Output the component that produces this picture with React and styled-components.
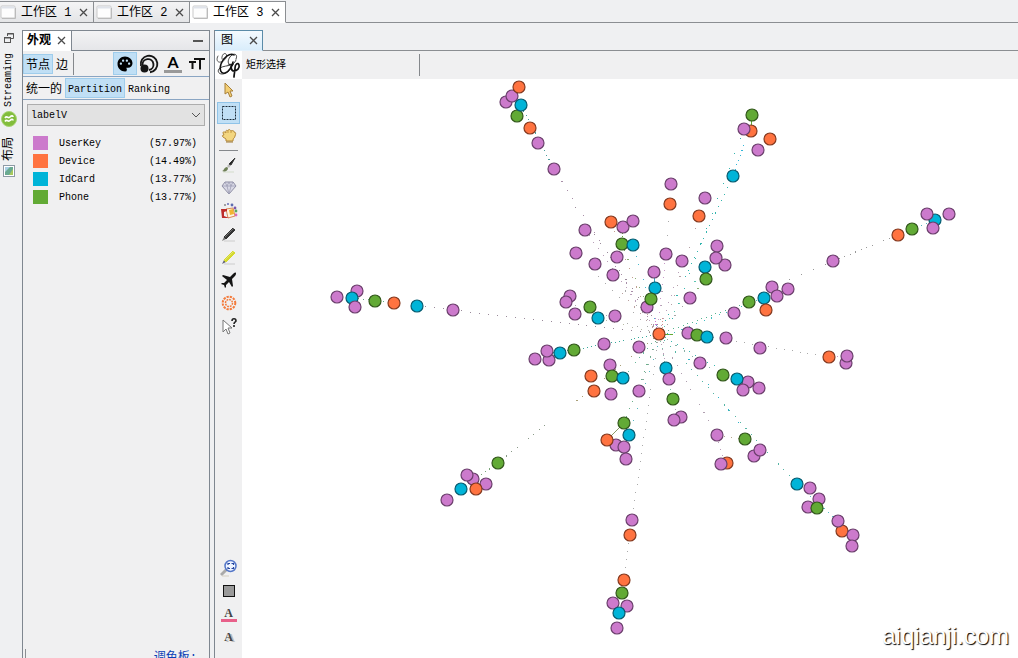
import React, { useState } from 'react'
import styled, { createGlobalStyle } from 'styled-components'
import { MdPalette } from 'react-icons/md'

const colors = {
  P: '#cc7acc',
  O: '#ff7340',
  C: '#00b4d8',
  G: '#62aa35',
}

const strokes = {
  P: '#6b3f6c',
  O: '#84391f',
  C: '#075c70',
  G: '#32571b',
}

const legend = [
  { name: 'UserKey', percent: '(57.97%)', color: colors.P },
  { name: 'Device', percent: '(14.49%)', color: colors.O },
  { name: 'IdCard', percent: '(13.77%)', color: colors.C },
  { name: 'Phone', percent: '(13.77%)', color: colors.G },
]

// kind, x, y - later nodes are drawn over earlier ones
const nodes = [
  ['P', 506, 102], ['P', 512, 96], ['O', 519, 87], ['G', 517, 116], ['C', 521, 105], ['O', 530, 128],
  ['P', 538, 143], ['P', 554, 169], ['P', 337, 297], ['P', 357, 291], ['C', 352, 298], ['P', 355, 307],
  ['G', 375, 301], ['O', 394, 303], ['C', 417, 306], ['P', 453, 310],
  ['G', 752, 115], ['O', 751, 131], ['P', 744, 129], ['O', 770, 139], ['P', 758, 150], ['C', 733, 176],
  ['P', 671, 184], ['O', 670, 204], ['P', 705, 198], ['O', 699, 216],
  ['O', 611, 222], ['P', 623, 227], ['P', 633, 221], ['P', 585, 230], ['G', 622, 244], ['C', 633, 245],
  ['P', 576, 253], ['P', 617, 257], ['P', 595, 264], ['P', 613, 275], ['P', 666, 254], ['P', 682, 261],
  ['P', 654, 272], ['C', 655, 288], ['P', 647, 307], ['G', 651, 299], ['P', 690, 298],
  ['P', 717, 246], ['P', 725, 265], ['P', 716, 258], ['C', 705, 267], ['G', 706, 279],
  ['P', 570, 296], ['P', 566, 302], ['P', 575, 314], ['G', 590, 307], ['C', 598, 318], ['P', 615, 316],
  ['P', 734, 313], ['G', 749, 302], ['P', 772, 287], ['C', 764, 298], ['P', 777, 296], ['P', 788, 289], ['O', 766, 310],
  ['P', 833, 261], ['O', 898, 235], ['G', 912, 229], ['C', 935, 220], ['P', 927, 214], ['P', 933, 228], ['P', 949, 214],
  ['O', 829, 357], ['P', 846, 363], ['P', 847, 356],
  ['P', 604, 344], ['P', 549, 360], ['P', 547, 351], ['P', 535, 359], ['C', 560, 353], ['G', 574, 350],
  ['P', 610, 365], ['G', 612, 376], ['C', 623, 378], ['O', 591, 376], ['O', 594, 391], ['P', 611, 394],
  ['P', 639, 391], ['P', 639, 347], ['O', 659, 334], ['C', 666, 368], ['P', 669, 379], ['G', 673, 399],
  ['G', 624, 423], ['P', 616, 445], ['C', 629, 435], ['O', 607, 440], ['P', 624, 447], ['P', 626, 459],
  ['G', 498, 463], ['P', 473, 479], ['P', 467, 475], ['P', 486, 484], ['C', 461, 489], ['O', 476, 489], ['P', 447, 500],
  ['P', 688, 333], ['G', 697, 335], ['C', 707, 337], ['P', 726, 338], ['P', 760, 348],
  ['P', 700, 363], ['G', 723, 375], ['P', 748, 382], ['C', 737, 379], ['P', 743, 390], ['P', 759, 388],
  ['P', 681, 417], ['P', 674, 420], ['P', 717, 435], ['O', 727, 463], ['P', 721, 464],
  ['G', 745, 439], ['P', 754, 456], ['P', 760, 450], ['C', 797, 484], ['P', 810, 488], ['P', 819, 499],
  ['P', 808, 507], ['G', 817, 508], ['O', 842, 531], ['P', 838, 521], ['P', 853, 535], ['P', 852, 546],
  ['P', 632, 520], ['O', 630, 535], ['O', 624, 580], ['G', 622, 593], ['P', 613, 603], ['P', 627, 606],
  ['C', 619, 613], ['P', 617, 628],
]

// x1, y1, x2, y2, color, gap between dots
const edges = [
  [659, 334, 453, 310, '#9a8a9a', 8], [453, 310, 417, 306, '#9a8a9a', 8], [394, 303, 352, 298, '#62aa85', 4],
  [659, 334, 554, 169, '#a88fa8', 9], [664, 334, 570, 199, '#9a8a9a', 10], [554, 169, 517, 98, '#4b9c9c', 4],
  [659, 334, 585, 230, '#b9a0b9', 7], [655, 334, 576, 253, '#aaa', 9], [659, 334, 595, 264, '#b9a0a0', 8],
  [659, 334, 613, 275, '#aaa', 8], [655, 334, 611, 222, '#c0a090', 9], [659, 334, 633, 245, '#49b9cc', 7],
  [659, 334, 622, 245, '#8aaf75', 9], [659, 334, 670, 204, '#aaa', 13], [662, 334, 699, 216, '#b5a0a5', 9],
  [657, 334, 666, 254, '#c79ac7', 6], [659, 334, 682, 261, '#b9a0b9', 7], [659, 334, 733, 176, '#33b5ae', 6],
  [667, 334, 744, 129, '#33b5ae', 15], [735, 170, 744, 145, '#33b5d8', 4], [659, 334, 705, 267, '#5ac5b0', 8],
  [659, 334, 690, 298, '#a5a5a5', 5], [659, 334, 749, 302, '#55b58f', 4], [659, 338, 764, 298, '#42bdc0', 7],
  [777, 285, 833, 261, '#999', 12], [833, 261, 898, 235, '#999', 5], [898, 235, 935, 220, '#5ab2c0', 4],
  [659, 334, 566, 302, '#aaa', 10], [659, 334, 598, 318, '#b9b9a5', 8], [659, 334, 574, 350, '#39a89a', 3],
  [574, 350, 547, 353, '#3a9a9a', 1], [659, 334, 673, 334, '#62aa35', 0], [697, 335, 829, 357, '#aaa', 7],
  [829, 357, 847, 356, '#c79ac7', 3], [659, 334, 573, 404, '#aaa078', 6], [545, 425, 498, 463, '#8a9a88', 6],
  [498, 463, 461, 489, '#7aa57a', 4], [659, 334, 623, 378, '#69b69a', 5], [659, 334, 639, 391, '#88aaa0', 7],
  [659, 334, 624, 423, '#6aaf89', 7], [662, 334, 629, 435, '#55b8c0', 12], [659, 334, 632, 520, '#aaa', 7],
  [630, 535, 624, 580, '#aaa', 7], [659, 334, 673, 399, '#7ac0a5', 6], [659, 334, 669, 379, '#b9a0b9', 4],
  [659, 334, 717, 435, '#b0a0b0', 8], [659, 334, 797, 484, '#55b5a5', 7], [669, 334, 760, 450, '#2fb2c8', 15],
  [659, 334, 737, 379, '#3ab8b0', 6], [659, 334, 743, 390, '#8aafa5', 9], [673, 399, 678, 418, '#aaa', 4],
  [717, 435, 745, 439, '#b5a890', 6], [717, 435, 724, 463, '#b9a0b9', 6], [797, 484, 838, 521, '#5ac0c5', 5],
  [624, 423, 607, 440, '#8a9a68', 0], [654, 272, 655, 288, '#3aa5c0', 0], [752, 115, 751, 131, '#62aa35', 0],
  [622, 230, 622, 244, '#62aa35', 2], [737, 379, 748, 382, '#086b75', 0], [690, 298, 706, 279, '#8aaf75', 5],
  [657, 331, 655, 318, '#cc7acc', 2], [662, 331, 662, 316, '#cf8f88', 2],
]

const CloseIcon = () => (
  <svg width="9" height="9" viewBox="0 0 9 9">
    <path d="M1 1l7 7M8 1L1 8" stroke="#4b4b4b" strokeWidth="1.3" fill="none" />
  </svg>
)

const WindowIcon = () => (
  <svg width="16" height="14" viewBox="0 0 16 14">
    <rect x="1" y="1" width="14" height="12" rx="1" fill="#fdfdfd" stroke="#c9c9c9" />
    <path d="M1.5 2.5h13" stroke="#dfe3ea" strokeWidth="2" />
    <path d="M2 13.5h13.5V3" stroke="#bbb" fill="none" />
  </svg>
)

const RestoreIcon = () => (
  <svg width="10" height="10" viewBox="0 0 10 10" fill="none" stroke="#555">
    <path d="M3.5 3V.5h6v5H7" />
    <path d="M3 1h7" />
    <rect x=".5" y="4.5" width="6" height="5" />
    <path d="M0 5h7" />
  </svg>
)

const StreamIcon = () => (
  <svg width="16" height="16" viewBox="0 0 16 16">
    <circle cx="8" cy="8" r="7.5" fill="#82bd3c" stroke="#a8d474" />
    <path d="M4 7c2-3 3 1 5-1s3-1 3 0M4 10.500c2-3 3 1 5-1s3-1 3 0" stroke="#fff" strokeWidth="1.700" fill="none" />
  </svg>
)

const LayoutIcon = () => (
  <svg width="12" height="12" viewBox="0 0 12 12">
    <rect x=".5" y=".5" width="11" height="11" fill="#fff" stroke="#8d9aa5" />
    <rect x="2" y="2" width="8" height="8" fill="#6aaa91" />
    <path d="M2 2h5L2 7z" fill="#a9cfe4" />
    <path d="M10 4v6H6z" fill="#a7c95e" />
  </svg>
)

const SizeIcon = () => (
  <svg width="20" height="20" viewBox="0 0 20 20" fill="none" stroke="#151515">
    <path d="M2 12A8.300 8.300 0 1 1 11 18.300" strokeWidth="1.900" />
    <path d="M3.500 11A5.500 5.500 0 1 1 10 16" strokeWidth="1.900" />
    <circle cx="5.500" cy="14.500" r="4" fill="#151515" stroke="none" />
  </svg>
)

const LabelSizeIcon = () => (
  <svg width="16" height="13" viewBox="0 0 16 13" fill="none" stroke="#111" strokeWidth="2">
    <path d="M0 5h7M3.500 5v7M5 2h11M11 2v10.500" />
  </svg>
)

const GephiLogo = () => (
  <svg width="25" height="28" viewBox="0 0 25 28" fill="none" stroke="#111" strokeLinecap="round">
    <path d="M2 5C0 8 1 12 5 11S12 5 10 3 5 5 6 8" strokeWidth=".7" />
    <path d="M18 4C14 1 7 7 5 13s0 10 4 9 7-7 8-11" strokeWidth="1.500" />
    <path d="M20 8c2-4-1-6-4-4s-5 7-3 9 6-1 7-4" strokeWidth=".8" />
    <path d="M12 14c2-1 4-1 4 0-1 6-6 9-10 9s-5-4-2-6 8-2 11-3" strokeWidth=".8" />
    <path d="M17 13c-3 2-2 7 1 7s6-3 5-6-4-1-4 3-1 6-1 9" strokeWidth="1.700" />
  </svg>
)

const PointerIcon = () => (
  <svg width="16" height="18" viewBox="0 0 16 18">
    <path d="M4 2v11l3-2 2 5 2-1-2-5h3z" fill="#f3cf75" stroke="#a7803b" strokeLinejoin="round" />
  </svg>
)

const MarqueeIcon = () => (
  <svg width="16" height="16" viewBox="0 0 16 16">
    <rect x="1.500" y="1.500" width="13" height="13" fill="none" stroke="#1b2a38" strokeDasharray="2 1" />
  </svg>
)

const HandIcon = () => (
  <svg width="16" height="16" viewBox="0 0 16 16">
    <path d="M2 5c0-2 2-1 3 0-1-3 1-3 2-2 0-2 2-2 3 0 2-1 3 0 3 1 2 0 2 2 1 4 0 2-2 2-2 4v1H5v-2L2 9c-1-1-1-2 1-2z" fill="#f3d680" stroke="#b4893b" />
    <path d="M7 3v2M10 3v2" stroke="#c99c45" />
    <path d="M5 14h7" stroke="#9f7832" />
  </svg>
)

const BrushIcon = () => (
  <svg width="18" height="18" viewBox="0 0 18 18">
    <path d="M3 16h11" stroke="#d3dccb" />
    <path d="M2 15c2 0 2-4 5-4l1 1c0 3-3 4-6 3z" fill="#6e7f56" />
    <path d="M7 10l2 2 2-3-2-1z" fill="#bbb" />
    <path d="M9 8l2 1 4-7z" fill="#222" stroke="#333" />
  </svg>
)

const GemIcon = () => (
  <svg width="16" height="14" viewBox="0 0 16 14" strokeLinejoin="round">
    <path d="M4 1h8l3 4-7 8-7-8z" fill="#d9d9e6" stroke="#8e8ea4" />
    <path d="M1 5h14M4 1l2 4 2 8 2-8 2-4M6 5l2-4 2 4" fill="none" stroke="#9d9db4" strokeWidth=".8" />
  </svg>
)

const BucketIcon = () => (
  <svg width="18" height="18" viewBox="0 0 18 18">
    <circle cx="5" cy="3" r="1" fill="#888" />
    <circle cx="8" cy="2" r="1" fill="#696fb8" />
    <circle cx="12" cy="3" r="1.400" fill="#5e6cb0" />
    <circle cx="15" cy="6" r="1.400" fill="#7b58ab" />
    <circle cx="16" cy="9" r="1.400" fill="#58ab60" />
    <circle cx="16" cy="13" r="1.400" fill="#dc67c1" />
    <path d="M6 7l7-1 2 8-7 2z" fill="#fff3e0" stroke="#d98a58" />
    <path d="M9 8l4-1 1 5-4 1z" fill="#f1b531" />
    <path d="M1 7h6v2L4 10v4l5 2H2z" fill="#bd2c2a" />
  </svg>
)

const PencilIcon = ({ color, tip }) => (
  <svg width="18" height="18" viewBox="0 0 18 18">
    <path d="M4 16h11" stroke="#ccc" />
    <path d="M2 16l2-4 2 2z" fill={tip} />
    <path d="M4 12l9-9 2 2-9 9z" fill={color} stroke={color} />
    <path d="M5 12l9-9" stroke="#fff" strokeOpacity=".3" />
  </svg>
)

const PlaneIcon = () => (
  <svg width="16" height="16" viewBox="0 0 16 16" fill="#151515">
    <path d="M15 1c-1-1-2 0-4 2L9 5 2 3 1 4l5 4-3 3H1l-1 1 3 1 1 3 1-1v-2l3-3 3 5 1-1-1-7 2-2c2-2 2-3 2-4z" />
  </svg>
)

const SunIcon = () => (
  <svg width="16" height="16" viewBox="0 0 16 16" fill="none" stroke="#f37b3c">
    <circle cx="8" cy="8" r="6.300" strokeWidth="2" strokeDasharray="2.300 1" />
    <circle cx="8" cy="8" r="3.500" strokeWidth="1.500" strokeDasharray="1.800 .9" />
  </svg>
)

const HelpPointerIcon = () => (
  <svg width="16" height="18" viewBox="0 0 16 18">
    <path d="M2 3v12l3-3 2 5 2-1-2-5h4z" fill="#fff" stroke="#777" strokeLinejoin="round" />
    <path d="M11 4c0-3 4-3 4 0 0 1-2 1-2 3M13 8v2" fill="none" stroke="#222" strokeWidth="1.600" />
  </svg>
)

const ZoomIcon = () => (
  <svg width="18" height="18" viewBox="0 0 18 18">
    <path d="M1 16l6-6" stroke="#aaa" strokeWidth="3" />
    <path d="M2 17h7" stroke="#d5cfc2" />
    <circle cx="10.500" cy="7" r="5.500" fill="#eef4ff" stroke="#5577c8" strokeWidth="1.500" />
    <path d="M8 6V4.500h2M11.500 4.500h2V6M13.500 8v1.500h-2M10 9.500H8V8" fill="none" stroke="#2747a0" strokeWidth="1.200" />
  </svg>
)

const SquareIcon = () => (
  <svg width="12" height="12" viewBox="0 0 12 12">
    <rect x=".5" y=".5" width="11" height="11" fill="#999" stroke="#111" />
  </svg>
)

function App() {
  const [tool, setTool] = useState('rect')
  const [attribute, setAttribute] = useState('labelV')

  const tools = [
    { id: 'pointer', label: '直接选择', icon: <PointerIcon /> },
    { id: 'rect', label: '矩形选择', icon: <MarqueeIcon /> },
    { id: 'drag', label: '拖动', icon: <HandIcon /> },
  ]
  const editTools = [
    { id: 'brush', label: '画笔', icon: <BrushIcon /> },
    { id: 'sizer', label: '大小', icon: <GemIcon /> },
    { id: 'painter', label: '填充', icon: <BucketIcon /> },
    { id: 'node', label: '节点铅笔', icon: <PencilIcon color="#353535" tip="#777" /> },
    { id: 'edge', label: '边铅笔', icon: <PencilIcon color="#d5d92e" tip="#667" /> },
    { id: 'path', label: '最短路径', icon: <PlaneIcon /> },
    { id: 'heat', label: '热图', icon: <SunIcon /> },
    { id: 'edit', label: '编辑', icon: <HelpPointerIcon /> },
  ]

  const renderTool = (t) => (
    <ToolButton key={t.id} aria-label={t.label} $active={tool === t.id} onClick={() => setTool(t.id)}>
      {t.icon}
    </ToolButton>
  )

  return (
    <Page>
      <GlobalStyle />
      <Workspaces>
        {[1, 2, 3].map((n) => (
          <Workspace key={n} $active={n === 3}>
            <WindowIcon />
            <WorkspaceName>工作区 {n}</WorkspaceName>
            <CloseButton aria-label="关闭"><CloseIcon /></CloseButton>
          </Workspace>
        ))}
      </Workspaces>

      <Main>
        <SideStrip>
          <RestoreIcon />
          <SideTab>
            <SideText $latin>Streaming</SideText>
            <StreamIcon />
          </SideTab>
          <SideTab>
            <SideText>布局</SideText>
            <LayoutIcon />
          </SideTab>
        </SideStrip>

        <Appearance>
          <PanelHeader>
            <PanelTab>
              外观
              <CloseButton aria-label="关闭"><CloseIcon /></CloseButton>
            </PanelTab>
            <Minimize aria-label="最小化" />
          </PanelHeader>
          <ElementRow>
            <Toggle $active>节点</Toggle>
            <Toggle>边</Toggle>
            <Divider />
            <ModeGroup>
              <ModeButton aria-label="颜色" $active><MdPalette size={18} /></ModeButton>
              <ModeButton aria-label="大小"><SizeIcon /></ModeButton>
              <ModeButton aria-label="标签颜色"><ColorLetter>A</ColorLetter></ModeButton>
              <ModeButton aria-label="标签尺寸"><LabelSizeIcon /></ModeButton>
            </ModeGroup>
          </ElementRow>
          <KindRow>
            <Toggle>统一的</Toggle>
            <Toggle $active $latin>Partition</Toggle>
            <Toggle $latin>Ranking</Toggle>
          </KindRow>
          <SelectWrap>
            <Select aria-label="属性" value={attribute} onChange={(e) => setAttribute(e.target.value)}>
              <option>labelV</option>
            </Select>
            <Chevron width="10" height="6" viewBox="0 0 10 6">
              <path d="M1 1l4 4 4-4" stroke="#555" fill="none" />
            </Chevron>
          </SelectWrap>
          <Legend>
            {legend.map((x) => (
              <LegendRow key={x.name}>
                <Swatch $color={x.color} />
                <span>{x.name}</span>
                <span>{x.percent}</span>
              </LegendRow>
            ))}
          </Legend>
          <PaletteFooter>
            <PaletteLink href="#">调色板:</PaletteLink>
          </PaletteFooter>
        </Appearance>

        <GraphPanel>
          <GraphHeader>
            <GraphTab>
              图
              <CloseButton aria-label="关闭"><CloseIcon /></CloseButton>
            </GraphTab>
          </GraphHeader>
          <GraphBar>
            <LogoBox><GephiLogo /></LogoBox>
            <ToolName>矩形选择</ToolName>
            <Divider />
          </GraphBar>
          <GraphBody>
            <Tools>
              {tools.map(renderTool)}
              <ToolLine />
              {editTools.map(renderTool)}
              <ToolSpace />
              <ToolButton aria-label="居中"><ZoomIcon /></ToolButton>
              <ToolButton aria-label="背景颜色"><SquareIcon /></ToolButton>
              <ToolButton aria-label="标签颜色"><PinkLetter>A</PinkLetter></ToolButton>
              <ToolButton aria-label="字体"><ShadowLetter>A</ShadowLetter></ToolButton>
            </Tools>
            <Canvas>
              <Graph viewBox="242 79 776 579">
                <g shapeRendering="crispEdges">
                  {edges.map(([x1, y1, x2, y2, color, gap], key) => (
                    <line key={key} x1={x1} y1={y1} x2={x2} y2={y2} stroke={color} strokeDasharray={gap ? `1 ${gap}` : 'none'} />
                  ))}
                </g>
                {nodes.map(([kind, x, y], key) => (
                  <circle key={key} cx={x} cy={y} r="6" fill={colors[kind]} stroke={strokes[kind]} strokeWidth="1.200" />
                ))}
              </Graph>
              <Watermark>aiqianji.com</Watermark>
            </Canvas>
          </GraphBody>
        </GraphPanel>
      </Main>
    </Page>
  )
}

const GlobalStyle = createGlobalStyle`
 *{
  box-sizing:border-box;
 }
 body{
  margin:0;
  background:#eff0f2;
 }
 button{
  border:none;
  background:none;
  padding:0;
  font:inherit;
  color:inherit;
 }
 svg{
  display:block;
  flex-shrink:0;
 }
`;

const Page = styled.div`
 display:flex;
 flex-direction:column;
 height:100vh;
 overflow:hidden;
 font-family:"Liberation Mono","Noto Sans CJK SC",monospace;
 font-size:12px;
 line-height:18px;
 color:#000;
`;

const Workspaces = styled.div`
 display:flex;
 height:23px;
 padding-top:1px;
 flex-shrink:0;
 border-bottom:1px solid #8b8e92;
`;

const Workspace = styled.div`
 display:flex;
 align-items:center;
 width:96px;
 height:22px;
 padding:0 4px 0 2px;
 border:1px solid #8b8e92;
 border-left:none;
 border-bottom-color:${(p) => (p.$active ? '#fff' : '#8b8e92')};
 background:${(p) => (p.$active ? '#fff' : 'linear-gradient(#f4f4f5,#e4e5e7)')};
 &:first-child{
  width:94px;
  padding-left:0;
 }
`;

const WorkspaceName = styled.span`
 flex:1;
 padding-top:2px;
 padding-left:5px;
 white-space:nowrap;
`;

const CloseButton = styled.button`
 display:flex;
 padding:1px;
`;

const Main = styled.div`
 display:flex;
 flex:1;
 min-height:0;
 padding-top:7px;
`;

const SideStrip = styled.div`
 display:flex;
 flex-direction:column;
 align-items:center;
 gap:10px;
 width:22px;
 padding-top:3px;
 padding-right:4px;
`;

const SideTab = styled.button`
 display:flex;
 flex-direction:column;
 align-items:center;
 gap:4px;
`;

const SideText = styled.span`
 writing-mode:vertical-rl;
 text-orientation:sideways;
 transform:rotate(180deg);
 font-size:${(p) => (p.$latin ? 10 : 12)}px;
 line-height:16px;
`;

const Appearance = styled.section`
 display:flex;
 flex-direction:column;
 width:188px;
 flex-shrink:0;
 border:1px solid #7f8790;
 border-bottom:none;
 background:#f0f0f1;
`;

const PanelHeader = styled.div`
 display:flex;
 justify-content:space-between;
 align-items:center;
 height:20px;
 background:linear-gradient(#f3f3f4,#e5e6e9);
 border-bottom:1px solid #7f8790;
`;

const PanelTab = styled.div`
 display:flex;
 align-items:center;
 gap:5px;
 height:20px;
 padding:0 4px;
 font-weight:700;
 background:#fff;
 border-right:1px solid #7f8790;
`;

const Minimize = styled.button`
 width:10px;
 height:2px;
 margin-right:6px;
 background:#555;
`;

const ElementRow = styled.div`
 display:flex;
 align-items:center;
 height:26px;
 border-bottom:1px solid #8aa5c3;
`;

const KindRow = styled.div`
 display:flex;
 align-items:center;
 height:23px;
 border-bottom:1px solid #8aa5c3;
`;

const Toggle = styled.button`
 height:20px;
 padding:2px 2px 0;
 border:1px solid ${(p) => (p.$active ? '#9fcdec' : 'transparent')};
 background:${(p) => (p.$active ? '#c0dff5' : 'none')};
 font-size:${(p) => (p.$latin ? 10 : 12)}px;
 line-height:18px;
 white-space:nowrap;
`;

const Divider = styled.div`
 width:1px;
 height:22px;
 margin-left:2px;
 background:#85888c;
`;

const ModeGroup = styled.div`
 display:flex;
 margin-left:auto;
`;

const ModeButton = styled.button`
 display:flex;
 align-items:center;
 justify-content:center;
 width:24px;
 height:23px;
 border:1px solid ${(p) => (p.$active ? '#9fcdec' : 'transparent')};
 background:${(p) => (p.$active ? '#c0dff5' : 'none')};
`;

const ColorLetter = styled.span`
 width:18px;
 border-bottom:3px solid #999;
 font-family:Lato,sans-serif;
 font-size:16px;
 font-weight:700;
 line-height:16px;
 text-align:center;
`;

const SelectWrap = styled.div`
 position:relative;
 margin:4px 4px 0;
`;

const Select = styled.select`
 appearance:none;
 display:block;
 width:100%;
 height:22px;
 padding:0 3px;
 border:1px solid #adadad;
 border-radius:0;
 background:#e2e2e2;
 color:#000;
 font-family:"Liberation Mono",monospace;
 font-size:10px;
`;

const Chevron = styled.svg`
 position:absolute;
 right:4px;
 top:8px;
 pointer-events:none;
`;

const Legend = styled.ul`
 list-style:none;
 margin:9px 0 0;
 padding:0 12px 0 10px;
 font-size:10px;
`;

const LegendRow = styled.li`
 display:grid;
 grid-template-columns:15px 1fr auto;
 column-gap:11px;
 align-items:center;
 height:18px;
`;

const Swatch = styled.i`
 height:14px;
 margin-bottom:2px;
 background:${(p) => p.$color};
`;

const PaletteFooter = styled.div`
 display:flex;
 justify-content:flex-end;
 height:9px;
 margin:auto 12px 0 2px;
 border-left:1px solid #8b8e92;
`;

const PaletteLink = styled.a`
 color:#0a3fb5;
 text-decoration:none;
`;

const GraphPanel = styled.section`
 display:flex;
 flex-direction:column;
 flex:1;
 min-width:0;
 margin-left:4px;
 border-left:1px solid #7f8790;
`;

const GraphHeader = styled.div`
 display:flex;
 height:21px;
 flex-shrink:0;
 border-bottom:1px solid #8b8e92;
`;

const GraphTab = styled.div`
 display:flex;
 align-items:center;
 justify-content:space-between;
 width:48px;
 height:21px;
 padding:0 3px 0 6px;
 border:1px solid #5b8ba8;
 border-left:none;
 border-bottom-color:#e2f1fc;
 background:linear-gradient(#f4faff,#d9edfb);
`;

const GraphBar = styled.div`
 display:flex;
 align-items:center;
 height:28px;
 flex-shrink:0;
 background:#f0f0f1;
`;

const LogoBox = styled.div`
 padding:0 1px;
 background:#fff;
`;

const ToolName = styled.span`
 width:175px;
 padding-top:2px;
 padding-left:4px;
 font-size:10px;
`;

const GraphBody = styled.div`
 display:flex;
 flex:1;
 min-height:0;
`;

const Tools = styled.div`
 display:flex;
 flex-direction:column;
 align-items:center;
 gap:1px;
 width:27px;
 flex-shrink:0;
 padding-bottom:10px;
 background:#f0f0f1;
`;

const ToolButton = styled.button`
 display:flex;
 align-items:center;
 justify-content:center;
 width:23px;
 height:22px;
 flex-shrink:0;
 border:1px solid ${(p) => (p.$active ? '#8fc3e8' : 'transparent')};
 background:${(p) => (p.$active ? '#c0dff5' : 'none')};
`;

const ToolLine = styled.div`
 width:19px;
 height:1px;
 margin:2px 0;
 background:#85888c;
`;

const ToolSpace = styled.div`
 flex:1;
`;

const PinkLetter = styled.span`
 width:16px;
 border-bottom:3px solid #e8608a;
 font-family:"Liberation Serif",serif;
 font-weight:700;
 line-height:12px;
 text-align:center;
 color:#444;
`;

const ShadowLetter = styled.span`
 font-family:"Liberation Serif",serif;
 font-weight:700;
 color:#444;
 text-shadow:2px 1px 0 #bbb;
`;

const Canvas = styled.div`
 position:relative;
 flex:1;
 min-width:0;
 background:#fff;
`;

const Graph = styled.svg`
 width:100%;
 height:100%;
`;

const Watermark = styled.span`
 position:absolute;
 right:9px;
 bottom:8px;
 font-family:"Liberation Sans",sans-serif;
 font-size:24px;
 line-height:28px;
 color:#fff;
 text-shadow:1px 1px 1px #000;
`;

export default App
